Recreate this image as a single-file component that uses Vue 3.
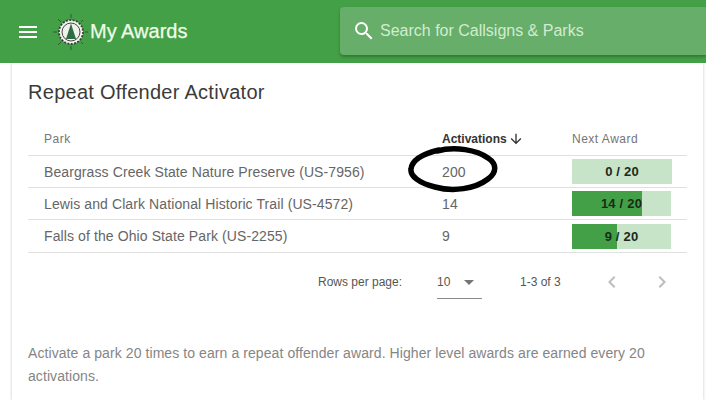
<script setup>
const rows = [
  { park: 'Beargrass Creek State Nature Preserve (US-7956)', count: 200, label: '0 / 20', fill: 0, width: 100 },
  { park: 'Lewis and Clark National Historic Trail (US-4572)', count: 14, label: '14 / 20', fill: 70, width: 99 },
  { park: 'Falls of the Ohio State Park (US-2255)', count: 9, label: '9 / 20', fill: 45, width: 99 },
]
</script>

<template>
  <div class="page">
    <header class="bar">
      <svg class="menu" width="24" height="24" viewBox="0 0 24 24"><path fill="#fff" d="M3 18h18v-2H3v2zm0-5h18v-2H3v2zm0-7v2h18V6H3z"/></svg>
      <svg class="logo" width="36" height="36" viewBox="0 0 36 36">
        <g stroke="#2b3a2e" stroke-width="0.7"><path d="M18 0v4M18 32v4M0 18h4M32 18h3M5 5l3 3M28 28l2 2M30 6l-2 2M8 28l-3 3"/></g>
        <circle cx="18" cy="18" r="12" fill="#f2f5ee" stroke="#3a3f3a" stroke-width="1.8" stroke-dasharray="2 1.400"/>
        <circle cx="18" cy="18" r="9" fill="#eef3ea" stroke="#444" stroke-width="1"/>
        <path fill="#2f6b45" d="M18 9.500l5 15.500h-10z"/>
      </svg>
      <div class="title">My Awards</div>
      <div class="search">
        <svg width="24" height="24" viewBox="0 0 24 24"><path fill="#fff" d="M15.500 14h-.79l-.28-.27A6.470 6.470 0 0 0 16 9.500 6.500 6.500 0 1 0 9.500 16c1.610 0 3.090-.59 4.230-1.570l.27.28v.79l5 4.990L20.490 19l-4.990-5zm-6 0C7.010 14 5 11.990 5 9.500S7.010 5 9.500 5 14 7.010 14 9.500 11.990 14 9.500 14z"/></svg>
        <span class="placeholder">Search for Callsigns &amp; Parks</span>
      </div>
    </header>

    <main class="card">
      <h2 class="heading">Repeat Offender Activator</h2>
      <div class="table">
        <div class="row head">
          <div class="c-park">Park</div>
          <div class="c-act sorted">Activations
            <svg width="16" height="16" viewBox="0 0 24 24"><path fill="#333" d="M20 12l-1.410-1.410L13 16.170V4h-2v12.170l-5.580-5.590L4 12l8 8 8-8z"/></svg>
          </div>
          <div class="c-next">Next Award</div>
        </div>
        <div v-for="r in rows" :key="r.park" class="row">
          <div class="c-park">{{ r.park }}</div>
          <div class="c-act">{{ r.count }}</div>
          <div class="c-next">
            <div class="progress" :style="{ width: r.width + 'px' }">
              <div class="fill" :style="{ width: r.fill + 'px' }"></div>
              <span class="plabel">{{ r.label }}</span>
            </div>
          </div>
        </div>
        <svg class="ring" width="92" height="50" viewBox="0 0 92 50">
          <path fill="none" stroke="#000" stroke-width="5.500" stroke-linecap="round" d="M30 6C48 1 70 5 81 13C90 19 90 27 81 34C68 44 46 47 28 42C12 38 3 31 4 24C5 15 15 9 32 5"/>
        </svg>
      </div>

      <div class="pager">
        <span class="rpp">Rows per page:</span>
        <div class="select"><span>10</span><i class="caret"></i></div>
        <span class="range">1-3 of 3</span>
        <svg class="chev" width="24" height="24" viewBox="0 0 24 24"><path fill="#bdbdbd" d="M15.410 7.410L14 6l-6 6 6 6 1.410-1.410L10.830 12z"/></svg>
        <svg class="chev next" width="24" height="24" viewBox="0 0 24 24"><path fill="#bdbdbd" d="M10 6L8.590 7.410 13.170 12l-4.580 4.590L10 18l6-6z"/></svg>
      </div>

      <p class="note">Activate a park 20 times to earn a repeat offender award. Higher level awards are earned every 20 activations.</p>
    </main>
  </div>
</template>

<style>
html, body { margin: 0; background: #fff; }
</style>

<style scoped>
.page { width: 706px; height: 400px; overflow: hidden; font-family: "Liberation Sans", Arial, sans-serif; background: #fff; }
.bar { height: 63px; background: #43a047; display: flex; align-items: center; position: relative; z-index: 2; }
.menu { margin-left: 16px; flex: none; }
.logo { margin-left: 12.500px; flex: none; }
.title { color: #f0fbe9; font-size: 20px; margin-left: 1.500px; width: 250px; flex: none; -webkit-text-stroke: .25px #f0fbe9; }
.search { flex: 1; height: 48px; margin-top: -1px; background: #66ae69; border-radius: 4px 0 0 4px; box-shadow: 0 2px 3px rgba(0,0,0,.25); display: flex; align-items: center; padding-left: 12px; gap: 4px; }
.placeholder { color: #d2ecd0; font-size: 16px; }
.card { margin-left: 12px; width: 691px; height: 337px; box-sizing: border-box; padding: 0 16px; background: #fff; box-shadow: 0 0 3px rgba(0,0,0,.22); }
.heading { margin: 0; padding-top: 16px; height: 43px; box-sizing: content-box; font-weight: 400; font-size: 20px; line-height: 26px; color: #3b3b3b; letter-spacing: .28px; }
.table { position: relative; }
.row { display: flex; align-items: center; height: 32px; box-sizing: border-box; border-bottom: 1px solid #e0e0e0; font-size: 14px; color: #666; letter-spacing: .1px; }
.row:last-of-type { height: 33px; }
.head { height: 34px; font-size: 12px; font-weight: 400; color: #757575; letter-spacing: .5px; }
.c-park { width: 398px; padding-left: 16px; flex: none; box-sizing: content-box; }
.c-act { width: 130px; flex: none; }
.sorted { color: #333; display: flex; align-items: center; gap: 1px; font-weight: 700; font-size: 12px; letter-spacing: 0; }
.c-next { flex: none; }
.progress { position: relative; height: 25px; background: #c7e3c8; overflow: hidden; display: flex; align-items: center; justify-content: center; }
.fill { position: absolute; left: 0; top: 0; bottom: 0; background: #43a047; }
.plabel { position: relative; font-size: 13px; font-weight: 700; color: #1a2a1b; letter-spacing: .2px; }
.ring { position: absolute; left: 379px; top: 23px; }
.pager { position: relative; height: 58px; display: flex; align-items: center; font-size: 12px; color: #555; }
.rpp { margin-left: 290px; width: 119px; flex: none; }
.select { width: 45px; height: 32px; margin-top: 1px; border-bottom: 1px solid #8a8a8a; display: flex; align-items: center; box-sizing: border-box; flex: none; }
.caret { width: 0; height: 0; margin-left: 14px; border: 5px solid transparent; border-top-color: #757575; border-bottom: 0; }
.range { margin-left: 38px; width: 80px; flex: none; }
.chev { margin-left: 0; flex: none; }
.next { margin-left: 26px; }
.note { margin: 31px 0 0; font-size: 14px; line-height: 23px; color: #858585; letter-spacing: .08px; }
</style>
